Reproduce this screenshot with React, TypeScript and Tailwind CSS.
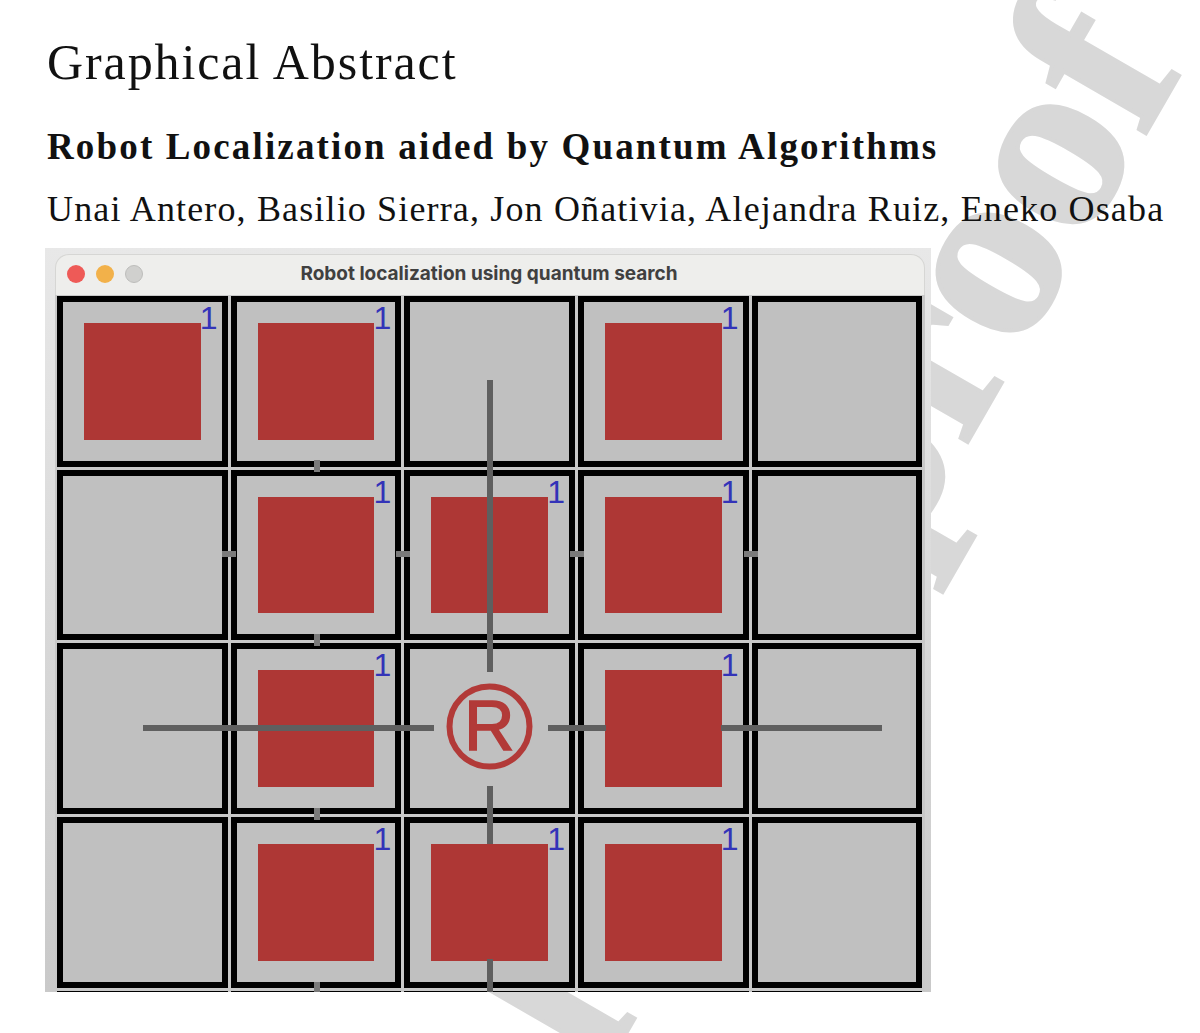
import React from "react";

const grid = [
  [1, 1, 0, 1, 0],
  [0, 1, 1, 1, 0],
  [0, 1, 2, 1, 0],
  [0, 1, 1, 1, 0],
  [0, 0, 0, 0, 0],
];

function Cell({ kind }: { kind: number }) {
  return (
    <div className="relative h-[170.67px] w-[170.67px] border-[6px] border-black bg-[#c0c0c0] p-[21px]">
      {kind === 1 && (
        <>
          <div className="h-full w-full bg-[#ae3735]" />
          <span className="absolute right-[4px] top-[0px] font-['Liberation_Sans'] text-[32px] leading-[32px] text-[#3333b8]">
            1
          </span>
        </>
      )}
    </div>
  );
}

// scan rays and small stubs, in window grid coordinates
function Rays() {
  const rays = [
    [435, 85, 435, 377],
    [435, 491, 435, 549],
    [435, 664, 435, 697],
    [88, 433, 379, 433],
    [493, 433, 551, 433],
    [666, 433, 827, 433],
  ];
  const stubs = [
    [262, 165, 262, 177],
    [262, 339, 262, 351],
    [262, 513, 262, 525],
    [262, 687, 262, 697],
    [167, 259, 181, 259],
    [341, 259, 355, 259],
    [515, 259, 529, 259],
    [689, 259, 703, 259],
  ];
  return (
    <svg className="absolute left-0 top-0" width="870" height="697">
      {rays.map((r, i) => (
        <line key={i} x1={r[0]} y1={r[1]} x2={r[2]} y2={r[3]} stroke="#5f5f5f" strokeWidth="6" />
      ))}
      {stubs.map((r, i) => (
        <line key={i} x1={r[0]} y1={r[1]} x2={r[2]} y2={r[3]} stroke="#7a7a7a" strokeWidth="6" />
      ))}
      <circle cx="434.5" cy="431.5" r="40" fill="none" stroke="#b23a38" strokeWidth="6" />
    </svg>
  );
}

export default function App() {
  return (
    <div className="relative h-[1033px] w-[1200px] overflow-hidden bg-white font-['Liberation_Serif'] text-[#111]">
      {/* Watermark */}
      <span className="absolute right-[16px] top-[-142px] origin-[100%_209px] -rotate-[60deg] whitespace-nowrap text-[250px] font-bold leading-none text-[#d8d8d8] [-webkit-text-stroke:4px_#d8d8d8]">
        Journal Pre-proof
      </span>

      <div className="relative pt-[32px]">
        <h1 className="pl-[47px] text-[50px] font-normal leading-[60px] tracking-[1.9px]">Graphical Abstract</h1>
        <h2 className="mt-[35px] pl-[47px] text-[37px] font-bold leading-[40px] tracking-[2.15px]">
          Robot Localization aided by Quantum Algorithms
        </h2>
        <p className="mt-[21px] pl-[47px] text-[36px] leading-[42px] tracking-[1.15px]">
          Unai Antero, Basilio Sierra, Jon Oñativia, Alejandra Ruiz, Eneko Osaba
        </p>

        {/* Screenshot of the app window */}
        <div className="ml-[45px] mt-[18px] h-[744px] w-[886px] bg-gradient-to-b from-[#e8e8e8] to-[#c9c9c9] pl-[10px] pt-[6px]">
          <div className="w-[870px]">
            <div className="relative flex h-[41px] items-center rounded-t-[14px] border border-b-0 border-[#d6d6d4] bg-[#eeeeec]">
              <div className="absolute left-[11px] top-[10px] flex gap-[11px]">
                <div className="h-[18px] w-[18px] rounded-full bg-[#ee5a57]" />
                <div className="h-[18px] w-[18px] rounded-full bg-[#f2b14a]" />
                <div className="h-[18px] w-[18px] rounded-full border border-[#bdbdbb] bg-[#d0d0ce]" />
              </div>
              <div className="w-full pb-[4px] pr-[2px] text-center font-['Inter'] text-[19px] font-bold leading-none text-[#404040]">
                Robot localization using quantum search
              </div>
            </div>
            <div className="relative h-[697px] overflow-hidden bg-[#c8c8c8] pl-[2px] pt-[1px]">
              <div className="grid grid-cols-[repeat(5,170.67px)] gap-[3px]">
                {grid.flat().map((kind, i) => (
                  <Cell key={i} kind={kind} />
                ))}
              </div>
              <Rays />
              <span className="absolute left-[409px] top-[391px] w-[50px] text-center font-['Liberation_Sans'] text-[70px] leading-[80px] text-[#b23a38] [-webkit-text-stroke:1.5px_#b23a38]">
                R
              </span>
            </div>
          </div>
        </div>
      </div>
    </div>
  );
}
